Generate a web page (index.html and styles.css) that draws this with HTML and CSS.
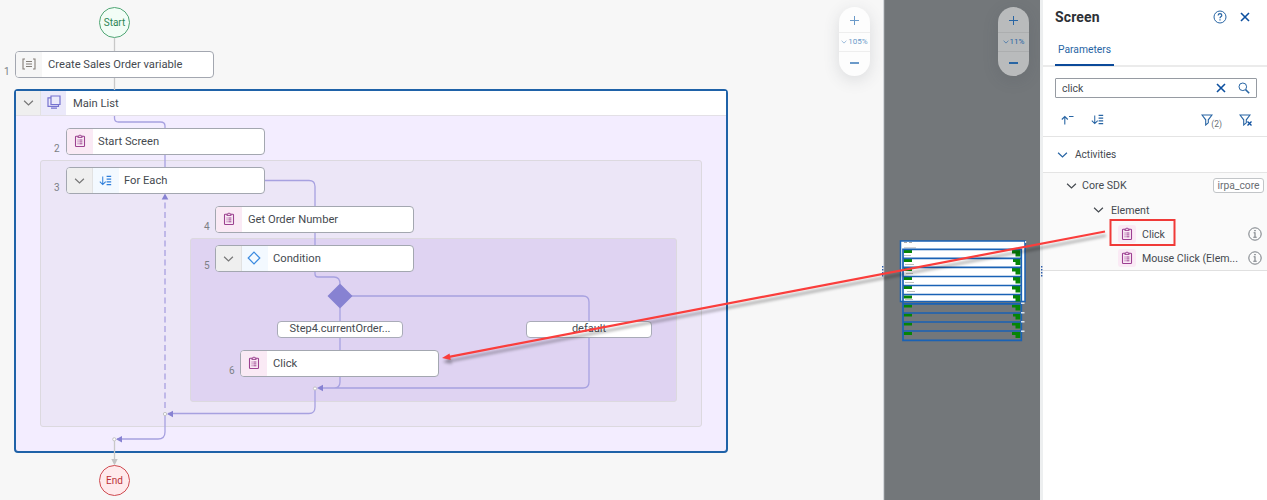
FILE: index.html
```
<!DOCTYPE html>
<html lang="en">
<head>
<meta charset="utf-8">
<title>Automation editor</title>
<link rel="stylesheet" href="styles.css">
</head>
<body>
<svg class="defs" width="0" height="0">
  <symbol id="clip" viewBox="0 0 12 14"><g fill="none" stroke="currentColor"><rect x="1.500" y="2.200" width="9" height="10.300" rx=".8" stroke-width="1.100"/><path d="M3.800 3.400V2.200h1.100a1.100 1.100 0 0 1 2.200 0h1.100v1.200z" stroke-width="1" fill="#faeaf5"/><path d="M3.600 6h.9M5.400 6h3M3.600 7.900h.9M5.400 7.900h3M3.600 9.800h.9M5.400 9.800h3" stroke-width="1"/></g></symbol>
  <symbol id="chev" viewBox="0 0 12 8"><path d="M1.200 1.500 6 6.200l4.800-4.700" fill="none" stroke="currentColor" stroke-width="1.300"/></symbol>
  <symbol id="sort" viewBox="0 0 14 12"><path d="M4 1.500v9M.8 7.300 4 10.500l3.200-3.200M8.200 1.500h5M8.200 4.500h5M8.200 7.500h5M8.200 10.500h5" fill="none" stroke="currentColor" stroke-width="1.100"/></symbol>
  <symbol id="cross" viewBox="0 0 10 10"><path d="m1 1 8 8M9 1 1 9" fill="none" stroke="currentColor" stroke-width="1.600"/></symbol>
  <symbol id="info" viewBox="0 0 14 14"><g fill="none" stroke="currentColor"><circle cx="7" cy="7" r="6.200"/><path d="M5.600 5.800H7v4.500M5.300 10.300h3.400M6.300 3.600h1.400" stroke-width="1.100"/></g></symbol>
  <symbol id="funnel" viewBox="0 0 12 12"><path d="M1 1h10L7.300 5.800v3L4.700 11V5.800z" fill="none" stroke="currentColor" stroke-width="1.100"/></symbol>
</svg>

<div class="app">
  <main class="canvas">
    <section class="region main-list">
      <header class="main-head">
        <span class="cell grey"><svg class="i-chev"><use href="#chev"/></svg></span>
        <span class="cell lilac"><svg width="14" height="14" viewBox="0 0 14 14" fill="none" stroke="#7673cf" stroke-width="1.200"><path d="M4 1h9v8.500H4zM4 2.800H1V11.300h10.500V9.500M4 13.200h6"/></svg></span>
        <span class="title">Main List</span>
      </header>
    </section>
    <section class="region loop"></section>
    <section class="region branch"></section>

    <svg class="wires" width="884" height="500" fill="none" stroke="#a7a1e0" stroke-width="1.300">
      <g stroke="#c8c8c8"><path d="M114.500 38v13M114.500 77v13M114.500 439v20"/></g>
      <path d="M111.300 459h6.400l-3.200 6.500z" fill="#c4c4c4" stroke="none"/>
      <path d="M114.500 116v2q0 4 4 4h42q4.500 0 4.500 4v2M165 155v12M265 180.500h44q6 0 6 6V206M315 232v13M315 271v3q0 3 3 3h16q6 0 6 7M340 296h243q6 0 6 6v80q0 6-6 6H320M340 308v42M340 377v5q0 6-6 6M315 390v17q0 6.500-6 6.500H168M165 414v18q0 7-7 7h-41"/>
      <path d="M165 408V200" stroke="#bbb3e6" stroke-width="1.800" stroke-dasharray="6 3.500"/>
      <g fill="#8782d2" stroke="none"><path d="M165 193.500l3.300 6h-6.600zM317 388l6-3.300v6.600zM167 414l6-3.300v6.600zM116 439.300l6-3.300v6.600zM340 283.500l12.500 12.500-12.500 12.500-12.500-12.500z"/></g>
      <g fill="#fff" stroke="#c4c4c4" stroke-width="1"><circle cx="315" cy="388.500" r="1.600"/><circle cx="165" cy="414" r="1.600"/><circle cx="114.300" cy="439.300" r="1.600"/></g>
    </svg>

    <div class="terminal start">Start</div>
    <div class="terminal end">End</div>

    <article class="node n1"><span class="cell pale"><svg width="14" height="12" viewBox="0 0 14 12" fill="none" stroke="#857f78" stroke-width="1.100"><path d="M3 1H1v10h2M11 1h2v10h-2M4 3.500h6M4 6h6M4 8.500h6"/></svg></span><span class="title">Create Sales Order variable</span></article>
    <article class="node n2"><span class="cell pink"><svg class="i-clip"><use href="#clip"/></svg></span><span class="title">Start Screen</span></article>
    <article class="node n3"><span class="cell grey"><svg class="i-chev"><use href="#chev"/></svg></span><span class="cell sky"><svg class="i-sort"><use href="#sort"/></svg></span><span class="title">For Each</span></article>
    <article class="node n4"><span class="cell pink"><svg class="i-clip"><use href="#clip"/></svg></span><span class="title">Get Order Number</span></article>
    <article class="node n5"><span class="cell grey"><svg class="i-chev"><use href="#chev"/></svg></span><span class="cell sky"><svg width="14" height="14" viewBox="0 0 14 14"><path d="m7 1.200 5.800 5.800L7 12.800 1.200 7z" fill="none" stroke="#3a8ae0" stroke-width="1.200"/></svg></span><span class="title">Condition</span></article>
    <article class="node n6"><span class="cell pink"><svg class="i-clip"><use href="#clip"/></svg></span><span class="title">Click</span></article>
    <span class="num m1">1</span><span class="num m2">2</span><span class="num m3">3</span><span class="num m4">4</span><span class="num m5">5</span><span class="num m6">6</span>
    <div class="pill p1">Step4.currentOrder...</div>
    <div class="pill p2">default</div>

    <div class="zoom zoom-light"><b class="plus"></b><span><svg class="i-mini"><use href="#chev"/></svg>105%</span><b></b></div>
  </main>

  <section class="preview">
    <div class="zoom zoom-dark"><b class="plus"></b><span><svg class="i-mini"><use href="#chev"/></svg>11%</span><b></b></div>
    <svg class="page-map" width="130" height="103" viewBox="898 239 130 103">
      <path d="M900.500 241h124.500v60.500H900.500z" fill="#fff" stroke="#1a62b5" stroke-width="1.500"/>
      <g fill="#aaa"><path d="M904 242h3v1h-3zM909 242h3v1h-3zM904 247.500h12v.8h-12zM904 255h7v.8h-7zM905 264h9v.8h-9zM906 273h7v.8h-7zM905 282h9v.8h-9zM907 291h8v.8h-8zM905 299h8v.8h-8z"/></g>
      <g fill="#068506">
        <path d="M903.500 250h8.500v3h-8.500zM903.500 259h8.500v3h-8.500zM903.500 268h8.500v3h-8.500zM903.500 277h8.500v3h-8.500zM903.500 286h8.500v3h-8.500zM903.500 295.500h8.500v3h-8.500zM903.500 304.500h8.500v3h-8.500zM903.500 313.500h8.500v3h-8.500zM903.500 322.500h8.500v3h-8.500zM903.500 332h8.500v3h-8.500z"/>
        <path d="M1012 249.500h8.500v7h-5v-3H1012zM1013 259h7.500v6h-5v-3H1013zM1012 268h8.500v6.500h-5v-3H1012zM1013 277h7.500v6.500h-5v-3H1013zM1012 286h8.500v6.500h-5v-3H1012zM1013 295h7.500v6.500h-5v-3H1013zM1012 304.500h8.500v6h-5v-3H1012zM1013 313.500h7.500v6h-5v-3H1013zM1012 322.500h8.500v6h-5v-3H1012zM1012 332h8.500v6h-5v-3H1012z"/>
      </g>
      <path d="M903 249.400h118.300v91H903zM903 258.400h118M903 267.400h118M903 276.500h118M903 285.500h118M903 294.500h118M903 303.800h118M903 313h118M903 322h118M903 331h118" fill="none" stroke="#1a62b5" stroke-width="1.700"/>
      <path d="M1021 302.500h3.500v1.500h-3.500zM1021 312h3.500v1.500h-3.500zM1021 321h3.500v1.500h-3.500zM1021 330.500h3.500v1.500h-3.500zM1025 241h1.200v2h-1.200z" fill="#dde5ef"/>
    </svg>
  </section>

  <aside class="panel">
    <header class="panel-head">
      <h1>Screen</h1>
      <svg class="help" viewBox="0 0 14 14" fill="none" stroke="currentColor"><circle cx="7" cy="7" r="6"/><path d="M5.100 5.500q.1-1.800 1.900-1.800 1.800.1 1.800 1.600 0 .9-1 1.500-.8.500-.8 1.400M7 9.300v1.100" stroke-width="1.200"/></svg>
      <svg class="i-cross"><use href="#cross"/></svg>
    </header>
    <nav class="tabs"><a>Parameters</a></nav>
    <div class="search"><span>click</span><svg class="i-cross"><use href="#cross"/></svg><svg class="lens" viewBox="0 0 12 12" fill="none" stroke="currentColor"><circle cx="4.800" cy="4.800" r="3.800"/><path d="m7.600 7.600 3.600 3.600" stroke-width="1.500"/></svg></div>
    <div class="tools">
      <svg class="up" viewBox="0 0 13 10" fill="none" stroke="currentColor" stroke-width="1.100"><path d="M3.800 9.500V1.500M.8 4.500l3-3 3 3M8 1.500h4.500"/></svg>
      <svg class="i-sort"><use href="#sort"/></svg>
      <svg class="i-funnel first"><use href="#funnel"/></svg><small>(2)</small>
      <span class="clear"><svg class="i-funnel"><use href="#funnel"/></svg><svg class="tiny" viewBox="0 0 5 5"><path d="m.5.500 4 4M4.500.5l-4 4" stroke="#0c4f9f" stroke-width="1.300"/></svg></span>
    </div>
    <div class="group"><svg class="i-row"><use href="#chev"/></svg><span>Activities</span></div>
    <div class="tree">
      <div class="row l1"><svg class="i-row"><use href="#chev"/></svg><span>Core SDK</span><em>irpa_core</em></div>
      <div class="row l2"><svg class="i-row"><use href="#chev"/></svg><span>Element</span></div>
      <div class="row l3"><i><svg class="i-clip"><use href="#clip"/></svg></i><span>Click</span><svg class="i-info"><use href="#info"/></svg></div>
      <div class="row l3"><i><svg class="i-clip"><use href="#clip"/></svg></i><span>Mouse Click (Elem...</span><svg class="i-info"><use href="#info"/></svg></div>
    </div>
  </aside>
</div>

<svg class="overlay" width="1267" height="500" viewBox="0 0 1267 500">
  <g fill="#2d5caa"><path d="M882 266h1.400v1.500H882zM882 269h1.400v1.500H882zM882 272h1.400v1.500H882zM882 275h1.400v1.500H882zM1041 266h1.400v1.500H1041zM1041 269h1.400v1.500H1041zM1041 272h1.400v1.500H1041zM1041 275h1.400v1.500H1041z"/></g>
  <g class="callout"><path d="M1105 231.500 449 356.800" fill="none" stroke="#fa3e3c" stroke-width="2.200"/><path d="m442 358 7.500-4.600 1.300 6.600z" fill="#fa3e3c"/></g>
  <path d="M1110.500 220h64v25h-64z" fill="none" stroke="#f03a38" stroke-width="2"/>
</svg>
</body>
</html>
```
FILE: styles.css
```
* { box-sizing: border-box; }
body { margin: 0; width: 1267px; height: 500px; overflow: hidden; font-family: Roboto, "Liberation Sans", sans-serif; font-size: 11px; color: #454a50; }
svg { display: block; flex: none; }
.defs { position: absolute; }
.app { display: flex; height: 500px; }

/* workflow canvas */
.canvas { position: relative; width: 884px; background: #f7f7f7; border-right: 1px solid #d5d8dc; }
.region, .node, .pill, .num, .terminal, .wires, .zoom { position: absolute; }
.region { border: 1px solid #dcd9df; border-radius: 3px; }
.main-list { left: 14px; top: 89px; width: 714px; height: 364px; border: 2px solid #1f62a8; border-radius: 4px; background: #f3edff; }
.loop { left: 40px; top: 160px; width: 662px; height: 267px; background: #ece6f7; }
.branch { left: 190px; top: 238px; width: 487px; height: 164px; background: #dfd3f2; }
.wires { left: 0; top: 0; }
.main-head { display: flex; align-items: center; height: 25px; background: #fff; border-bottom: 1px solid #e3e0e6; }
.main-head .cell { width: 25px; }
.main-head .lilac { padding-bottom: 2px; }
.main-head .title { padding-left: 7px; }
.node { display: flex; align-items: center; width: 199px; height: 27px; background: #fff; border: 1px solid #a3a7b0; border-radius: 4px; overflow: hidden; }
.cell { display: flex; align-items: center; justify-content: center; width: 26px; height: 100%; flex: none; }
.title { padding-left: 6px; font-size: 11.200px; white-space: nowrap; }
.grey { background: #efefef; border-right: 1px solid #e2e2e2; color: #777; }
.pale { background: #f6f6f6; padding-bottom: 2px; }
.lilac { background: #ebe9fa; }
.pink { background: #faeaf5; color: #9c4290; padding-bottom: 1px; }
.sky { background: #f3f9ff; color: #2f7fdb; }
.n5 .sky { padding: 0 2px 1px 0; }
.n5 .title { padding-left: 5px; }
.n1 { left: 15px; top: 51px; }
.n2 { left: 66px; top: 128px; }
.n2 .title { padding-left: 5px; }
.n3 { left: 66px; top: 167px; }
.n3 .sky { padding-right: 2px; }
.n3 .title { padding-left: 5px; }
.n4 { left: 215px; top: 206px; }
.n5 { left: 215px; top: 245px; }
.n6 { left: 240px; top: 350px; }
.num { font-size: 10px; color: #7b7f85; }
.m1 { left: 4px; top: 66px; }
.m2 { left: 54px; top: 143px; }
.m3 { left: 54px; top: 182px; }
.m4 { left: 204px; top: 221px; }
.m5 { left: 204px; top: 260px; }
.m6 { left: 229px; top: 365px; }
.pill { width: 126px; height: 17px; line-height: 14px; text-align: center; background: #fff; border: 1px solid #a9abb8; border-radius: 4px; top: 321px; }
.p1 { left: 277px; }
.p2 { left: 526px; }
.terminal { left: 99px; width: 31px; height: 31px; border: 1px solid; border-radius: 50%; text-align: center; line-height: 29px; font-size: 10px; }
.start { top: 7px; color: #2d8554; border-color: #4fa574; background: #f2fdf6; }
.end { top: 465px; color: #bb3038; border-color: #cf4a50; background: #ffeaec; }

.i-chev { width: 11px; height: 8px; }
.i-clip { width: 12px; height: 14px; }
.i-sort { width: 13px; height: 11px; }
.i-mini { width: 6px; height: 4px; }
.i-cross { width: 10px; height: 10px; color: #0c4f9f; }

/* zoom controls */
.zoom { display: flex; flex-direction: column; justify-content: space-between; align-items: center; width: 31px; height: 69px; padding: 12px 0 0; border-radius: 16px; box-shadow: 0 4px 16px rgba(60, 70, 80, .15); top: 7px; font-size: 8px; }
.zoom span { display: flex; align-items: center; justify-content: center; gap: 1px; width: 100%; height: 20px; border: solid; border-width: 1px 0; }
.zoom b { width: 9px; height: 2px; background: currentColor; position: relative; margin-bottom: 12px; }
.zoom .plus { height: 1px; margin: 1px 0 0; }
.plus::after { content: ""; position: absolute; left: 4px; top: -4px; width: 1px; height: 9px; background: currentColor; }
.zoom-light { left: 839px; background: #fdfdfd; color: #6b9ac9; }
.zoom-light span { border-color: #eee; }
.zoom-dark { left: 113px; background: #b9bbbc; color: #2865a4; }
.zoom-dark span { border-color: #acaeaf; }

/* screen preview */
.preview { position: relative; width: 159px; background: #73777a; border-left: 1px solid #888c8f; border-right: 3px solid #edeff0; }
.page-map { position: absolute; left: 13px; top: 239px; }

/* side panel */
.panel { width: 224px; background: #fff; color: #454a50; }
.panel-head { display: flex; align-items: center; height: 34px; padding: 0 17px 0 12px; color: #2865a4; }
.panel-head h1 { margin: 0 auto 0 0; font-size: 14px; font-weight: 700; letter-spacing: .15px; color: #2d3136; }
.help { width: 14px; height: 14px; margin-right: 13px; }
.tabs { height: 33px; padding-left: 12px; border-bottom: 2px solid #ebebeb; }
.tabs a { display: block; width: 59px; height: 32px; padding-left: 3px; line-height: 32px; font-size: 10.300px; border-bottom: 2px solid #0b4a9a; color: #2865a4; white-space: nowrap; }
.search { display: flex; align-items: center; height: 20px; margin: 11px 10px 0 12px; padding: 0 6px; border: 1px solid #969ba2; border-radius: 1px; font-size: 10.500px; color: #2865a4; }
.search span { margin-right: auto; color: #454a50; }
.lens { width: 12px; height: 12px; margin-left: 12px; }
.tools { display: flex; align-items: center; height: 39px; padding: 5px 15px 0 18px; border-bottom: 1px solid #e4e4e4; color: #2865a4; }
.up { width: 13px; height: 10px; margin-right: 17px; }
.i-funnel { width: 12px; height: 12px; }
.first { margin-left: auto; }
.tools small { font-size: 8.500px; padding-top: 9px; margin: 0 17px 0 -2px; color: #6b6f75; }
.clear { display: flex; align-items: flex-end; }
.tiny { width: 5px; height: 5px; margin-left: -4px; }
.group { display: flex; align-items: center; gap: 7px; height: 36px; padding-left: 14px; font-size: 10.100px; border-bottom: 1px solid #e4e4e4; }
.group svg { color: #2865a4; }
.i-row { width: 11px; height: 8px; }
.tree { height: 98px; background: #fafafa; border-bottom: 1px solid #e0e0e0; }
.row { display: flex; align-items: center; height: 24px; padding-right: 5px; font-size: 10.600px; }
.l1 { height: 25px; padding-left: 23px; gap: 5px; padding-right: 3px; }
.l2 { padding-left: 50px; gap: 7px; }
.l3 { padding-left: 75px; gap: 6px; }
.row em { margin-left: auto; width: 51px; text-align: center; height: 15px; line-height: 13px; border: 1px solid #c2c5c8; border-radius: 3px; font-style: normal; font-size: 10.300px; color: #6a6e73; background: #fff; }
.row i { display: flex; align-items: center; justify-content: center; width: 18px; height: 18px; border-radius: 3px; background: #faeaf5; color: #9c3f92; }
.i-info { width: 14px; height: 14px; margin-left: auto; color: #777c82; }

/* annotation */
.overlay { position: absolute; left: 0; top: 0; }
.callout { filter: drop-shadow(1px 4px 1.500px rgba(0, 0, 0, .35)); }
```
